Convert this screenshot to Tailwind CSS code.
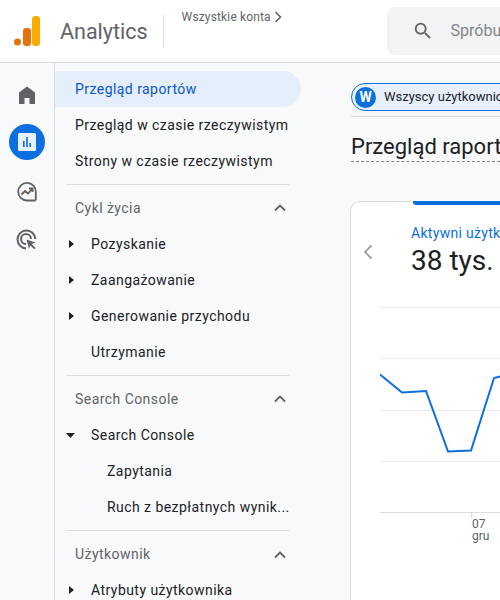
<!DOCTYPE html>
<html lang="pl">
<head>
<meta charset="UTF-8">
<title>Analytics</title>
<script src="https://cdn.jsdelivr.net/npm/@tailwindcss/browser@4"></script>
</head>
<body class="bg-[#f8f9fa] font-[Roboto,sans-serif]">
<div class="w-[500px] h-[600px] overflow-hidden flex flex-col">

  <!-- header -->
  <header class="h-[63px] shrink-0 flex bg-white border-b border-[#dadce0]">
    <svg class="ml-[14px] mt-[16px] w-[26px] h-[30px] shrink-0" viewBox="0 0 26 30">
      <circle cx="3.5" cy="26" r="3.5" fill="#e8710a"/>
      <rect x="9" y="12" width="8" height="18" rx="3" fill="#e8710a"/>
      <rect x="18" y="0" width="8" height="30" rx="3.5" fill="#f9ab00"/>
    </svg>
    <span class="ml-[20px] mt-[17px] h-[30px] leading-[30px] text-[21.5px] text-[#5f6368] shrink-0">Analytics</span>
    <div class="ml-[15px] mt-[15px] w-px h-[32px] bg-[#dadce0] shrink-0"></div>
    <div class="ml-[18px] mt-[9px] h-[16px] flex items-center gap-[3px] text-[12px] tracking-[.15px] text-[#5f6368] w-[205px] shrink-0">
      Wszystkie konta
      <svg class="w-[8px] h-[12px]" viewBox="0 0 8 12" fill="none" stroke="#5f6368" stroke-width="1.6"><path d="M1.5 1l5 5-5 5"/></svg>
    </div>
    <div class="mt-[7px] h-[48px] w-[200px] shrink-0 bg-[#f1f3f4] rounded-l-lg flex items-center">
      <svg class="ml-[25px] w-[22px] h-[22px]" viewBox="0 0 24 24" fill="#5f6368"><path d="M15.5 14h-.79l-.28-.27A6.47 6.47 0 0 0 16 9.5 6.5 6.5 0 1 0 9.5 16c1.61 0 3.09-.59 4.23-1.57l.27.28v.79l5 4.99L20.49 19l-4.99-5zm-6 0C7.01 14 5 11.99 5 9.5S7.01 5 9.5 5 14 7.01 14 9.5 11.99 14 9.5 14z"/></svg>
      <span class="ml-[17px] text-[16px] text-[#80868b] whitespace-nowrap">Spróbuj wyszukać</span>
    </div>
  </header>

  <div class="flex flex-1 min-h-0">
    <!-- icon rail -->
    <aside class="w-[55px] shrink-0 border-r border-[#dadce0] flex flex-col items-center pr-px">
      <svg class="mt-[20px] w-[24px] h-[24px]" viewBox="0 0 24 24" fill="#5f6368"><path d="M12 3.500 4 9.500V21h5.500v-6h5v6H20V9.500z"/></svg>
      <div class="mt-[17px] w-[36px] h-[36px] rounded-full bg-[#0b6fe0] flex items-center justify-center">
        <svg class="w-[18px] h-[18px]" viewBox="0 0 18 18"><rect width="18" height="18" rx="1.5" fill="#e8f0fe"/><path d="M5 8h1.600v6H5zM8.200 4h1.600v10H8.200zM11.400 10H13v4h-1.600z" fill="#0b6fe0"/></svg>
      </div>
      <svg class="mt-[20px] w-[24px] h-[24px]" viewBox="0 0 24 24" fill="none" stroke="#5f6368" stroke-width="1.8"><path d="M20.500 20.500H12A8.800 8.800 0 1 1 20.800 12v8.500"/><path d="M6.500 14.500l3.500-3.500 3 2.500 4-4.500M14 8.500h3.500V12" stroke="#6b5d52"/></svg>
      <svg class="mt-[24px] w-[24px] h-[24px]" viewBox="0 0 24 24" fill="none" stroke="#5f6368" stroke-width="2"><path d="M11 20.500A9 9 0 1 1 20.500 11"/><path d="M11 16a5 5 0 1 1 5-5"/><path d="M11.500 11.500l9 3-3.800 1.600 3.800 3.800-1.300 1.300-3.800-3.800-1.400 3.600z" fill="#5f6368" stroke="none"/></svg>
    </aside>

    <!-- report nav -->
    <nav class="w-[246px] shrink-0 pt-[8px] text-[14px] tracking-[.45px] text-[#202124]">
      <div class="h-[36px] flex items-center pl-[20px] rounded-r-[18px] bg-[#e5eefb] text-[#0b57d0]">Przegląd raportów</div>
      <div class="h-[36px] flex items-center pl-[20px]">Przegląd w czasie rzeczywistym</div>
      <div class="h-[36px] flex items-center pl-[20px]">Strony w czasie rzeczywistym</div>

      <div class="mt-[5px] ml-[12px] w-[222px] border-t border-[#dadce0]"></div>
      <div class="h-[46px] flex items-center justify-between pl-[20px] pr-[15px] text-[#5f6368]">
        Cykl życia
        <svg class="w-[12px] h-[8px]" viewBox="0 0 12 8" fill="none" stroke="#5f6368" stroke-width="1.8"><path d="M1 6.500l5-5 5 5"/></svg>
      </div>
      <div class="h-[36px] flex items-center pl-[14px] -mt-[5px]"><svg class="w-[5px] h-[8px] mr-[17px]" viewBox="0 0 5 8" fill="#202124"><path d="M0 0l5 4-5 4z"/></svg>Pozyskanie</div>
      <div class="h-[36px] flex items-center pl-[14px]"><svg class="w-[5px] h-[8px] mr-[17px]" viewBox="0 0 5 8" fill="#202124"><path d="M0 0l5 4-5 4z"/></svg>Zaangażowanie</div>
      <div class="h-[36px] flex items-center pl-[14px]"><svg class="w-[5px] h-[8px] mr-[17px]" viewBox="0 0 5 8" fill="#202124"><path d="M0 0l5 4-5 4z"/></svg>Generowanie przychodu</div>
      <div class="h-[36px] flex items-center pl-[36px]">Utrzymanie</div>

      <div class="mt-[5px] ml-[12px] w-[222px] border-t border-[#dadce0]"></div>
      <div class="h-[46px] flex items-center justify-between pl-[20px] pr-[15px] text-[#5f6368]">
        Search Console
        <svg class="w-[12px] h-[8px]" viewBox="0 0 12 8" fill="none" stroke="#5f6368" stroke-width="1.8"><path d="M1 6.500l5-5 5 5"/></svg>
      </div>
      <div class="h-[36px] flex items-center pl-[11px] -mt-[5px]"><svg class="w-[9px] h-[5px] mr-[16px]" viewBox="0 0 9 5" fill="#202124"><path d="M0 0h9L4.500 5z"/></svg>Search Console</div>
      <div class="h-[36px] flex items-center pl-[52px]">Zapytania</div>
      <div class="h-[36px] flex items-center pl-[52px]">Ruch z bezpłatnych wynik...</div>

      <div class="mt-[5px] ml-[12px] w-[222px] border-t border-[#dadce0]"></div>
      <div class="h-[47px] flex items-center justify-between pl-[20px] pr-[15px] text-[#5f6368]">
        Użytkownik
        <svg class="w-[12px] h-[8px]" viewBox="0 0 12 8" fill="none" stroke="#5f6368" stroke-width="1.8"><path d="M1 6.500l5-5 5 5"/></svg>
      </div>
      <div class="h-[36px] flex items-center pl-[14px] -mt-[6px]"><svg class="w-[5px] h-[8px] mr-[17px]" viewBox="0 0 5 8" fill="#202124"><path d="M0 0l5 4-5 4z"/></svg>Atrybuty użytkownika</div>
    </nav>

    <!-- main -->
    <main class="flex-1 min-w-0 pl-[50px] overflow-hidden">
      <div class="w-[300px]">
        <div class="mt-[20px] h-[28px] w-[260px] rounded-full border-[1.5px] border-[#0b6fe0] bg-[#e8f0fe] flex items-center pl-[3px]">
          <span class="w-[21px] h-[21px] rounded-full bg-[#0b6fe0] text-white text-[14px] font-bold flex items-center justify-center">W</span>
          <span class="ml-[8px] text-[13px] text-[#202124] whitespace-nowrap">Wszyscy użytkownicy</span>
        </div>
        <div class="mt-[5px] border-t border-[#dadce0]"></div>
        <div class="mt-[15px] h-[30px] w-[280px] border-b-[1.5px] border-dashed border-[#80868b] text-[22px] leading-[30px] text-[#202124] whitespace-nowrap">Przegląd raportów</div>

        <section class="mt-[39px] -ml-px w-[300px] h-[400px] bg-white border border-[#dadce0] rounded-tl-[10px] relative">
          <div class="absolute left-[62px] -top-px w-[240px] h-[4px] bg-[#0b6fe0] rounded-bl-[3px]"></div>
          <div class="flex">
            <svg class="mt-[42px] ml-[12px] w-[10px] h-[16px] shrink-0" viewBox="0 0 10 16" fill="none" stroke="#9aa0a6" stroke-width="1.8"><path d="M8.500 1.500L2 8l6.500 6.500"/></svg>
            <div class="ml-[38px] pt-[22px]">
              <div class="text-[14px] leading-[18px] tracking-[.3px] text-[#0b6fe0] whitespace-nowrap">Aktywni użytkownicy</div>
              <div class="text-[28px] leading-[38px] text-[#202124] whitespace-nowrap">38 tys.</div>
            </div>
          </div>
          <svg class="mt-[27px] ml-[29px] block" width="120" height="240" viewBox="0 0 120 240" fill="none">
            <g stroke="#e8eaed">
              <path d="M0 .5h120M0 51.500h120M0 103.500h120M0 154.500h120"/>
              <path d="M0 205.500h120" stroke="#dadce0"/>
              <path d="M91.500 205v6" stroke="#dadce0"/>
            </g>
            <path d="M0 67.500 22 85.500 46 84 68 144.500 91 143.500 114 71 120 69.500" stroke="#0b6fe0" stroke-width="2"/>
            <text x="92" y="221" font-size="12" fill="#5f6368" font-family="Roboto">07</text>
            <text x="92" y="233" font-size="12" fill="#5f6368" font-family="Roboto">gru</text>
          </svg>
        </section>
      </div>
    </main>
  </div>
</div>
</body>
</html>
